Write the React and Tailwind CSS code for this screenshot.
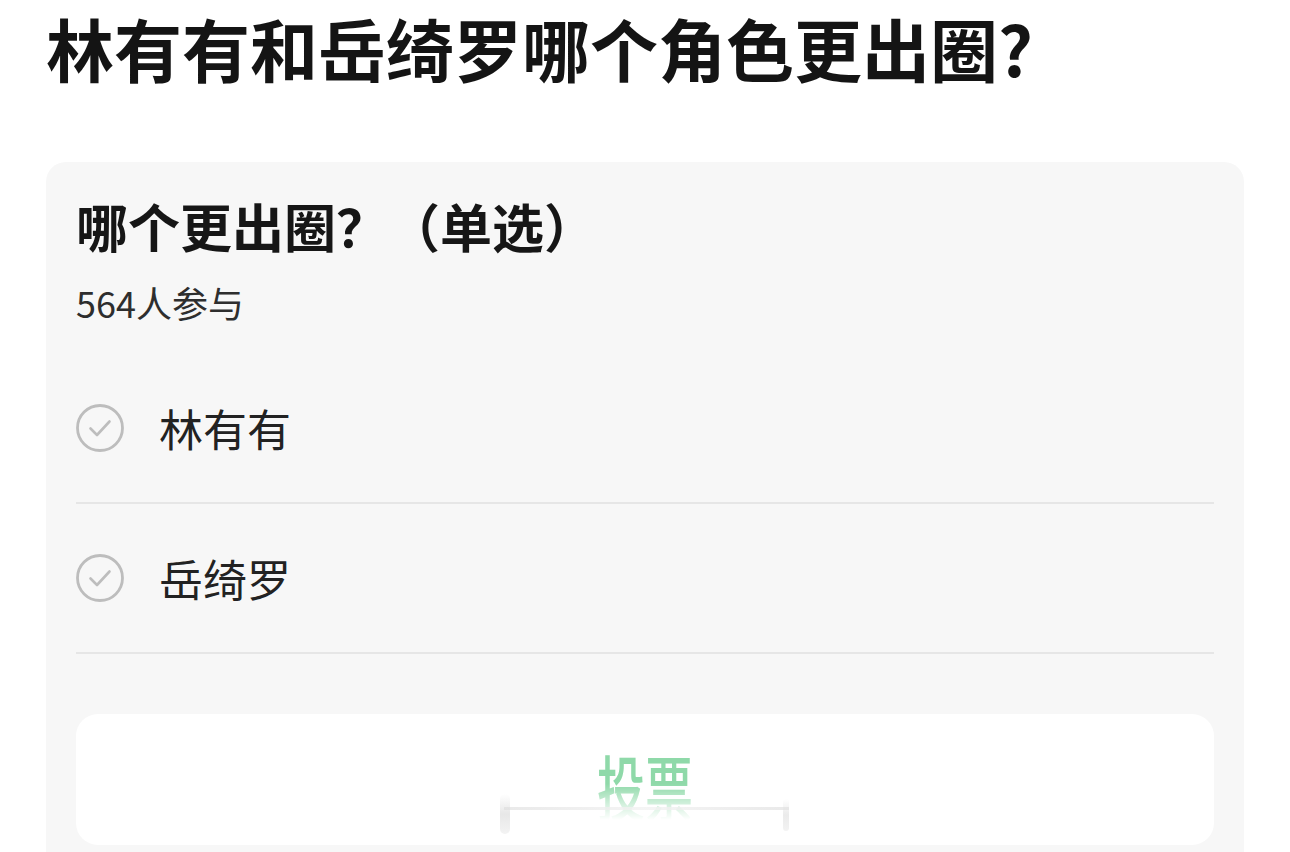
import React from "react";

const font = { fontFamily: '"Noto Sans CJK SC", "Noto Sans", sans-serif' };

function CheckCircle() {
  return (
    <svg width="48" height="48" viewBox="0 0 48 48" fill="none" className="shrink-0">
      <circle cx="24" cy="24" r="22.5" stroke="#bdbdbd" strokeWidth="2.8" />
      <path d="M14.5 24.5 L21 31 L33.5 17.5" stroke="#bdbdbd" strokeWidth="2.6" strokeLinecap="round" strokeLinejoin="round" />
    </svg>
  );
}

function Option({ label }) {
  return (
    <div className="flex h-[150px] items-center gap-[35px] border-b-2 border-[#e6e6e6]">
      <CheckCircle />
      <span className="text-[44px] leading-[52px] text-[#222222]">{label}</span>
    </div>
  );
}

export default function App() {
  return (
    <div style={font} className="h-[852px] w-[1290px] overflow-hidden bg-white">
      <div className="ml-[46px] mt-[8px] mb-[74px] h-[80px] w-[1100px]">
        <h1 className="whitespace-nowrap text-[68px] font-bold leading-[80px] text-[#141414]">
          林有有和岳绮罗哪个角色更出圈?
        </h1>
      </div>
      <div className="ml-[46px] w-[1198px] rounded-[20px] bg-[#f7f7f7] px-[30px] pt-[34px] pb-[40px]">
        <div className="text-[52px] font-bold leading-[60px] text-[#161616]">哪个更出圈？（单选）</div>
        <div className="mt-[26px] text-[36px] leading-[40px] text-[#2e2e2e]">564人参与</div>
        <div className="mt-[32px]">
          <Option label="林有有" />
          <Option label="岳绮罗" />
        </div>
        <div className="relative mt-[60px] flex h-[131px] items-start justify-center rounded-[22px] bg-white">
          <div className="relative mt-[34px] h-[80px]">
            <span
              className="block origin-top scale-y-[1.5] text-[48px] font-medium leading-[48px] text-[#8fd9a9]"
              style={{
                WebkitMaskImage: "linear-gradient(to bottom, #000 0%, #000 50%, rgba(0,0,0,0.4) 78%, transparent 100%)",
                maskImage: "linear-gradient(to bottom, #000 0%, #000 50%, rgba(0,0,0,0.4) 78%, transparent 100%)",
              }}
            >
              投票
            </span>
          </div>
          <div className="absolute left-[428px] top-[93px] h-[3px] w-[285px] bg-gradient-to-r from-[#e4e4e4] via-[#f2f2f2] to-[#e4e4e4] opacity-80" />
          <div className="absolute left-[424px] top-[80px] h-[40px] w-[10px] rounded-full bg-gradient-to-b from-transparent via-[#dddddd] to-[#eeeeee] opacity-70" />
          <div className="absolute left-[707px] top-[85px] h-[32px] w-[6px] rounded-full bg-gradient-to-b from-transparent via-[#e2e2e2] to-[#eeeeee] opacity-70" />
        </div>
      </div>
    </div>
  );
}
